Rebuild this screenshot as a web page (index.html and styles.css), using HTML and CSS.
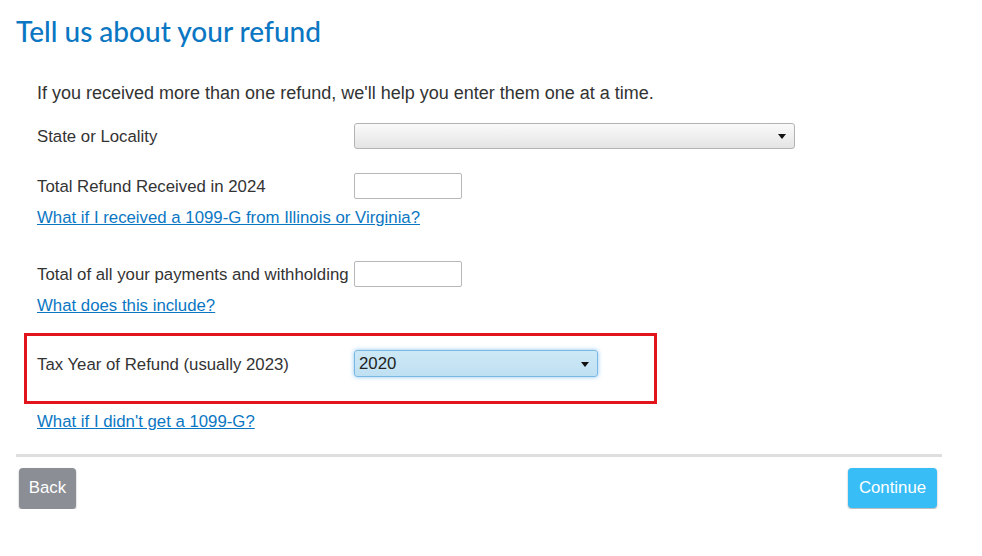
FILE: index.html
```html
<!DOCTYPE html>
<html>
<head>
<meta charset="utf-8">
<link rel="stylesheet" href="styles.css">
</head>
<body>
<div class="page">
  <h1 class="title">Tell us about your refund</h1>
  <div class="form">
    <p class="intro">If you received more than one refund, we'll help you enter them one at a time.</p>
    <div class="row row-state">
      <label class="label">State or Locality</label>
      <div class="select select-wide"><span class="select-text"></span><span class="arrow"></span></div>
    </div>
    <div class="row row-refund">
      <label class="label">Total Refund Received in 2024</label>
      <div class="input"></div>
    </div>
    <a class="link link-1" href="#">What if I received a 1099-G from Illinois or Virginia?</a>
    <div class="row row-pay">
      <label class="label">Total of all your payments and withholding</label>
      <div class="input"></div>
    </div>
    <a class="link link-2" href="#">What does this include?</a>
    <div class="highlight">
      <div class="row">
        <label class="label label-hl">Tax Year of Refund (usually 2023)</label>
        <div class="select select-year"><span class="select-text">2020</span><span class="arrow"></span></div>
      </div>
    </div>
    <a class="link link-3" href="#">What if I didn't get a 1099-G?</a>
  </div>
  <div class="rule"></div>
  <div class="actions">
    <button class="btn btn-back">Back</button>
    <button class="btn btn-continue">Continue</button>
  </div>
</div>
</body>
</html>
```
FILE: styles.css
```css
* { box-sizing: border-box; }
html, body { margin: 0; padding: 0; background: #fff; }
body { font-family: "Liberation Sans", Arial, sans-serif; font-size: 16.8px; color: #333; }
.page { padding-left: 16px; width: 942px; }
.title {
  margin: 14px 0 0;
  font-family: Lato, "Open Sans", sans-serif;
  font-weight: 500;
  font-size: 28px;
  line-height: 34px;
  color: #0b77c3;
}
.form { padding-left: 21px; }
.intro { margin: 35px 0 0; font-size: 18px; line-height: 20px; height: 20px; }
.row { display: flex; align-items: center; }
.label { width: 317px; flex: none; line-height: 20px; white-space: nowrap; padding-top: 2px; }
.row-state { margin-top: 20px; height: 26px; }
.row-refund { margin-top: 24px; height: 26px; }
.row-pay { margin-top: 33px; height: 26px; }
.link { display: block; color: #0b77c3; text-decoration: underline; line-height: 20px; height: 20px; width: max-content; }
.link-1 { margin-top: 9px; }
.link-2 { margin-top: 9px; }
.link-3 { margin-top: 8px; }
.select {
  position: relative;
  display: flex;
  align-items: center;
  border-radius: 3px;
  padding-left: 4px;
}
.select-wide {
  width: 441px; height: 26px;
  border: 1px solid #b3b3b3;
  background: linear-gradient(#fafafa, #e4e4e4);
}
.select-year {
  width: 244px; height: 27px;
  border: 1px solid #7ab8e6;
  background: linear-gradient(#cde8f6, #bfe0f2);
  box-shadow: 0 0 4px rgba(90, 170, 235, 0.7);
  color: #222;
}
.arrow {
  position: absolute;
  right: 8px; top: 50%;
  margin-top: -2px;
  width: 0; height: 0;
  border-left: 4px solid transparent;
  border-right: 4px solid transparent;
  border-top: 5px solid #111;
}
.input {
  width: 108px; height: 26px;
  border: 1px solid #b8b8b8;
  border-radius: 2px;
  background: #fff;
}
.highlight {
  margin: 17px 0 0 -13px;
  width: 633px;
  height: 71px;
  border: 3px solid #e2141c;
  padding: 14px 0 0 10px;
}
.label-hl { width: 317px; }
.rule { margin-top: 22px; height: 3px; background: #dedede; width: 926px; }
.actions { margin-top: 11px; display: flex; justify-content: space-between; width: 921px; padding-left: 3px; }
.btn {
  font-family: "Liberation Sans", Arial, sans-serif;
  font-size: 16.8px;
  color: #fff;
  border: none;
  border-radius: 4px;
  box-shadow: 0 1px 2px rgba(0,0,0,0.35);
  padding: 0;
}
.btn-back { width: 57px; height: 41px; background: #8b8e94; padding-bottom: 2px; }
.btn-continue { width: 89px; height: 40px; background: #38bdf7; }
```
